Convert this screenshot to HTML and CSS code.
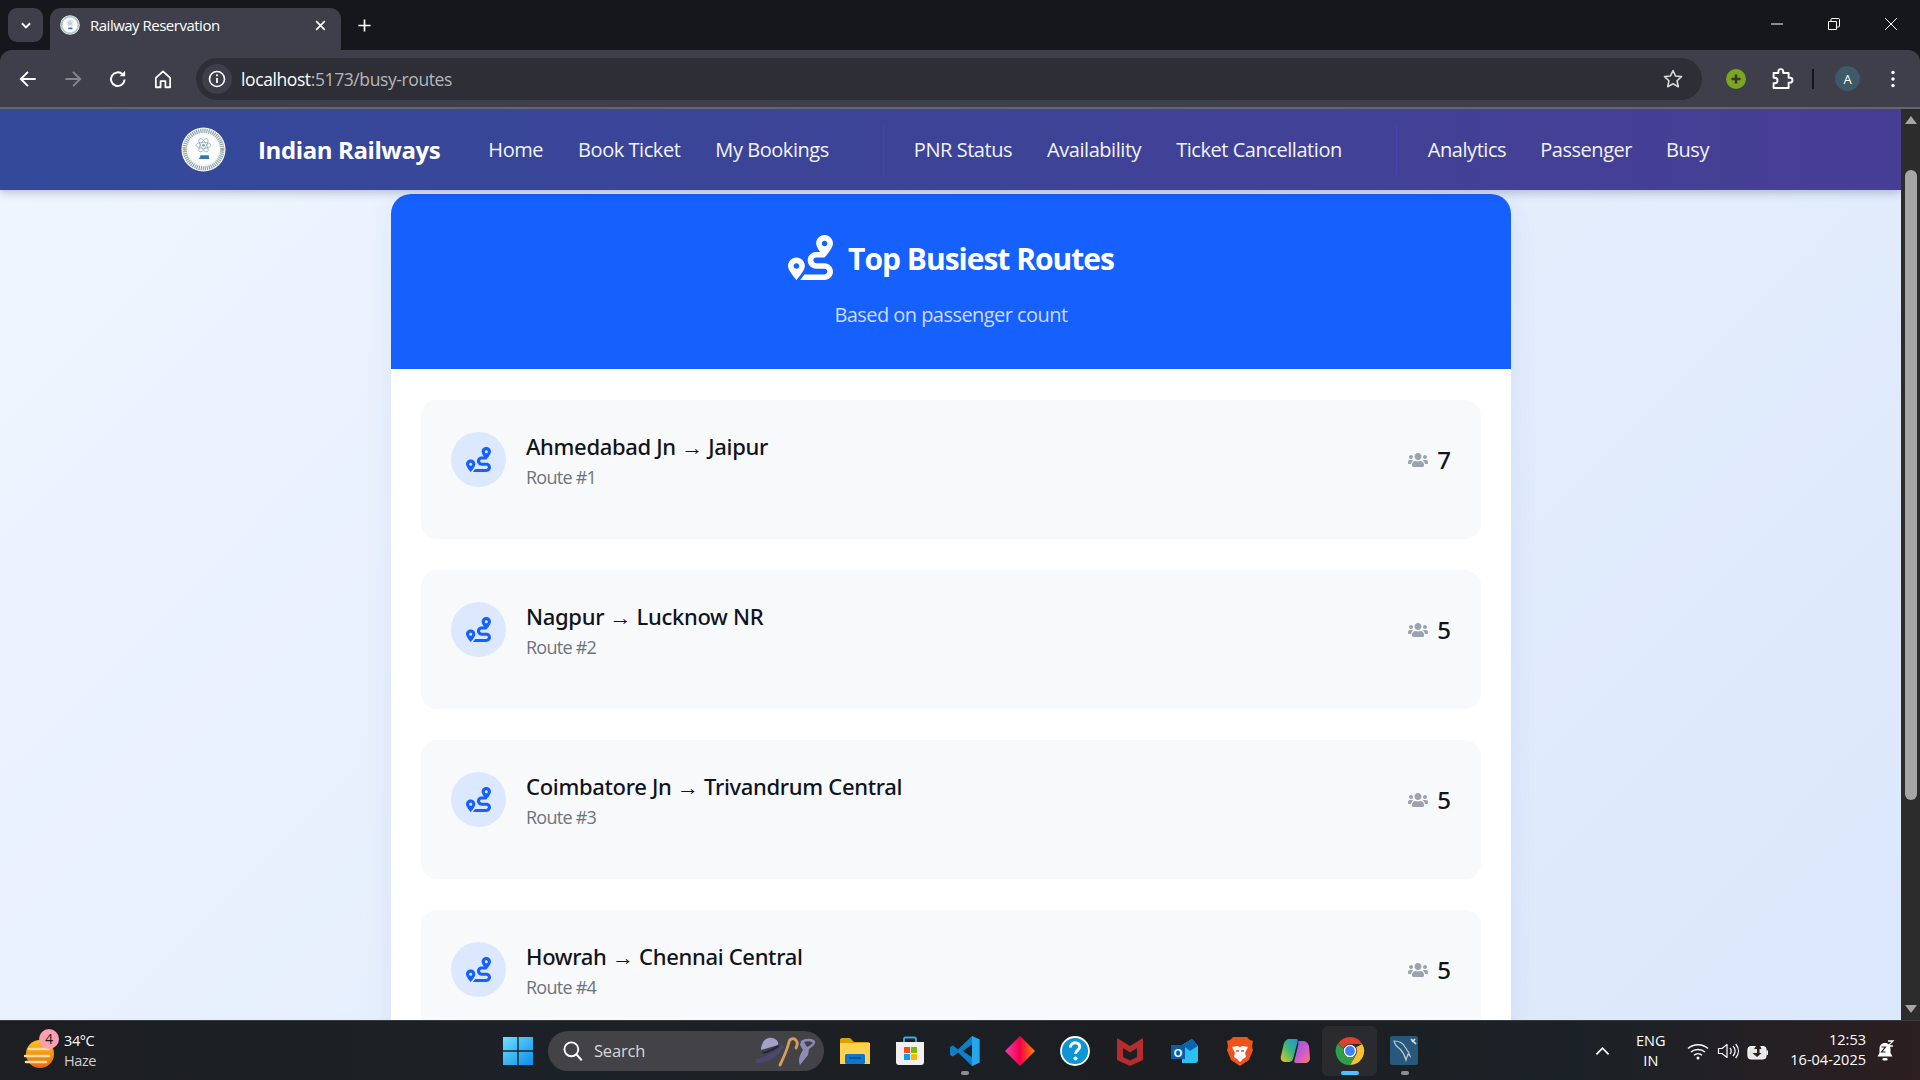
FILE: index.html
```html
<!DOCTYPE html>
<html lang="en">
<head>
<meta charset="utf-8">
<title>Railway Reservation</title>
<link rel="stylesheet" href="styles.css">
</head>
<body>
<svg class="defs" width="0" height="0" aria-hidden="true">
  <defs>
    <symbol id="route" viewBox="0 0 512 512"><path d="M416 320h-96c-17.6 0-32-14.4-32-32s14.4-32 32-32h96s96-107 96-160-43-96-96-96-96 43-96 96c0 25.5 22.2 63.4 45.3 96H320c-52.9 0-96 43.1-96 96s43.1 96 96 96h96c17.6 0 32 14.4 32 32s-14.4 32-32 32H185.5c-16 24.8-33.8 47.7-47.3 64H416c52.9 0 96-43.1 96-96s-43.1-96-96-96zm0-256c17.7 0 32 14.3 32 32s-14.3 32-32 32-32-14.3-32-32 14.3-32 32-32zM96 256c-53 0-96 43-96 96s96 160 96 160 96-107 96-160-43-96-96-96zm0 128c-17.7 0-32-14.3-32-32s14.3-32 32-32 32 14.3 32 32-14.3 32-32 32z"/></symbol>
    <symbol id="users" viewBox="0 0 640 512"><path d="M96 224c35.3 0 64-28.7 64-64s-28.7-64-64-64-64 28.7-64 64 28.7 64 64 64zm448 0c35.3 0 64-28.7 64-64s-28.7-64-64-64-64 28.7-64 64 28.7 64 64 64zm32 32h-64c-17.6 0-33.5 7.1-45.1 18.6 40.3 22.1 68.9 62 75.1 109.4h66c17.7 0 32-14.3 32-32v-32c0-35.3-28.7-64-64-64zm-256 0c61.9 0 112-50.1 112-112S381.9 32 320 32 208 82.1 208 144s50.1 112 112 112zm76.8 32h-8.3c-20.8 10-43.9 16-68.5 16s-47.6-6-68.5-16h-8.3C179.6 288 128 339.6 128 403.2V432c0 26.5 21.5 48 48 48h288c26.5 0 48-21.5 48-48v-28.8c0-63.6-51.6-115.2-115.2-115.2zm-223.7-13.4C161.5 263.1 145.6 256 128 256H64c-35.3 0-64 28.7-64 64v32c0 17.7 14.3 32 32 32h65.9c6.3-47.4 34.9-87.3 75.2-109.4z"/></symbol>
    <symbol id="seal" viewBox="0 0 48 48">
      <circle cx="24" cy="24" r="23.5" fill="#f4f7f6"/>
      <circle cx="24" cy="24" r="20" fill="none" stroke="#8ba3ad" stroke-width="4.500" stroke-dasharray="1.2 1"/>
      <circle cx="24" cy="24" r="16" fill="#fff"/>
      <g fill="none" stroke="#7d9fb3" stroke-width=".7">
        <ellipse cx="24" cy="19.500" rx="8" ry="3.200"/>
        <ellipse cx="24" cy="19.500" rx="8" ry="3.200" transform="rotate(60 24 19.500)"/>
        <ellipse cx="24" cy="19.500" rx="8" ry="3.200" transform="rotate(-60 24 19.500)"/>
      </g>
      <circle cx="24" cy="19.500" r="1.500" fill="#7d9fb3"/>
      <path d="M19 34l2-4h8l1 1v3z" fill="#2f7ab5"/>
      <circle cx="3.600" cy="24" r="1.300" fill="#e8953f"/>
      <circle cx="44.400" cy="24" r="1.300" fill="#e8953f"/>
    </symbol>
  </defs>
</svg>

<header class="browser">
  <div class="tabstrip">
    <div class="tab-search">
      <svg viewBox="0 0 12 12" class="ic12"><path d="M2.500 4.500 6 8l3.500-3.500" fill="none" stroke="#fff" stroke-width="1.600"/></svg>
    </div>
    <div class="tab">
      <svg class="favicon"><use href="#seal"/></svg>
      <span class="tab-title">Railway Reservation</span>
      <svg viewBox="0 0 12 12" class="tab-close"><path d="M2 2l8 8M10 2l-8 8" stroke="#fff" stroke-width="1.500"/></svg>
    </div>
    <svg viewBox="0 0 16 16" class="new-tab"><path d="M8 1.500v13M1.500 8h13" stroke="#fff" stroke-width="1.800"/></svg>
    <div class="win-controls">
      <svg viewBox="0 0 14 14" class="win-btn"><path d="M1 7h12" stroke="#fff" stroke-width="1"/></svg>
      <svg viewBox="0 0 14 14" class="win-btn"><path d="M1.500 4.500h8v8h-8zM4 4.500V2.500c0-.6.4-1 1-1h6.500c.6 0 1 .4 1 1V9c0 .6-.4 1-1 1h-2" fill="none" stroke="#fff" stroke-width="1"/></svg>
      <svg viewBox="0 0 14 14" class="win-btn"><path d="M1 1l12 12M13 1L1 13" stroke="#fff" stroke-width="1"/></svg>
    </div>
  </div>
  <div class="toolbar">
    <div class="tool"><svg viewBox="0 0 20 20" class="ic20"><path d="M17 10H4M10 3.500 3.500 10l6.500 6.500" fill="none" stroke="#fff" stroke-width="1.800"/></svg></div>
    <div class="tool"><svg viewBox="0 0 20 20" class="ic20"><path d="M3 10h13M10 3.500l6.500 6.500L10 16.500" fill="none" stroke="#85868c" stroke-width="1.800"/></svg></div>
    <div class="tool"><svg viewBox="0 0 20 20" class="ic20"><path d="M16 10.500a6.200 6.200 0 1 1-1.800-4.700" fill="none" stroke="#fff" stroke-width="1.800"/><path d="M16.500 2.500v5h-5z" fill="#fff"/></svg></div>
    <div class="tool"><svg viewBox="0 0 20 20" class="ic20"><path d="M3.500 9 10 3l6.500 6v8.500h-4.300V12H7.800v5.500H3.500z" fill="none" stroke="#fff" stroke-width="1.600" stroke-linejoin="round"/></svg></div>
    <div class="omnibox">
      <div class="site-info"><svg viewBox="0 0 20 20" class="ic18"><circle cx="10" cy="10" r="7.500" fill="none" stroke="#fff" stroke-width="1.600"/><path d="M10 9v5" stroke="#fff" stroke-width="1.800"/><circle cx="10" cy="6.300" r="1.100" fill="#fff"/></svg></div>
      <span class="url"><span class="url-host">localhost</span>:5173/busy-routes</span>
      <svg viewBox="0 0 20 20" class="star"><path d="m10 2.300 2.300 5 5.400.6-4 3.700 1.100 5.400-4.800-2.700L5.200 17l1.100-5.400-4-3.700 5.400-.6z" fill="none" stroke="#d6d6d8" stroke-width="1.500" stroke-linejoin="round"/></svg>
    </div>
    <div class="tray-tools">
      <svg viewBox="0 0 20 20" class="ext-green"><circle cx="10" cy="10" r="10" fill="#7ba61f"/><path d="M10 5.500v9M5.500 10h9" stroke="#33363b" stroke-width="2.600"/></svg>
      <svg viewBox="0 0 20 20" class="puzzle"><path d="M3 5h4V3.800a2 2 0 0 1 4 0V5h4.500v4h1.200a2 2 0 0 1 0 4h-1.200v4.500H3v-4h1a2 2 0 0 0 0-4.500H3z" fill="none" stroke="#fff" stroke-width="1.600" stroke-linejoin="round"/></svg>
      <span class="tool-sep"></span>
      <span class="avatar">A</span>
      <svg viewBox="0 0 6 20" class="dots"><circle cx="3" cy="3.500" r="1.700" fill="#fff"/><circle cx="3" cy="10" r="1.700" fill="#fff"/><circle cx="3" cy="16.500" r="1.700" fill="#fff"/></svg>
    </div>
  </div>
</header>

<div class="viewport">
  <div class="page">
    <nav class="nav">
      <svg class="logo"><use href="#seal"/></svg>
      <a class="brand">Indian Railways</a>
      <div class="nav-group">
        <a class="nav-link">Home</a>
        <a class="nav-link">Book Ticket</a>
        <a class="nav-link">My Bookings</a>
      </div>
      <div class="nav-group nav-group-sep">
        <a class="nav-link">PNR Status</a>
        <a class="nav-link">Availability</a>
        <a class="nav-link">Ticket Cancellation</a>
      </div>
      <div class="nav-group nav-group-sep nav-group-last">
        <a class="nav-link">Analytics</a>
        <a class="nav-link">Passenger</a>
        <a class="nav-link">Busy</a>
      </div>
    </nav>
    <main class="content">
      <section class="card">
        <div class="card-head">
          <h1 class="card-title"><svg class="title-icon"><use href="#route"/></svg><span class="title-text">Top Busiest Routes</span></h1>
          <p class="card-sub">Based on passenger count</p>
        </div>
        <div class="card-body">
          <article class="route">
            <span class="route-badge"><svg class="route-icon"><use href="#route"/></svg></span>
            <div class="route-text"><h2 class="route-name">Ahmedabad Jn → Jaipur</h2><p class="route-num">Route #1</p></div>
            <div class="route-count"><svg class="users-icon"><use href="#users"/></svg><span class="count">7</span></div>
          </article>
          <article class="route">
            <span class="route-badge"><svg class="route-icon"><use href="#route"/></svg></span>
            <div class="route-text"><h2 class="route-name">Nagpur → Lucknow NR</h2><p class="route-num">Route #2</p></div>
            <div class="route-count"><svg class="users-icon"><use href="#users"/></svg><span class="count">5</span></div>
          </article>
          <article class="route">
            <span class="route-badge"><svg class="route-icon"><use href="#route"/></svg></span>
            <div class="route-text"><h2 class="route-name">Coimbatore Jn → Trivandrum Central</h2><p class="route-num">Route #3</p></div>
            <div class="route-count"><svg class="users-icon"><use href="#users"/></svg><span class="count">5</span></div>
          </article>
          <article class="route">
            <span class="route-badge"><svg class="route-icon"><use href="#route"/></svg></span>
            <div class="route-text"><h2 class="route-name">Howrah → Chennai Central</h2><p class="route-num">Route #4</p></div>
            <div class="route-count"><svg class="users-icon"><use href="#users"/></svg><span class="count">5</span></div>
          </article>
        </div>
      </section>
    </main>
  </div>
  <div class="scrollbar">
    <svg viewBox="0 0 14 10" class="sb-arrow"><path d="M7 1l6 8H1z" fill="#a6a6a6"/></svg>
    <div class="sb-track"><div class="sb-thumb"></div></div>
    <svg viewBox="0 0 14 10" class="sb-arrow"><path d="M7 9 1 1h12z" fill="#a6a6a6"/></svg>
  </div>
</div>

<footer class="taskbar">
  <div class="weather">
    <span class="weather-icon">
      <svg viewBox="0 0 30 34" class="sun"><defs><linearGradient id="sung" x1="0" y1="0" x2="0" y2="1"><stop offset="0" stop-color="#fcc21b"/><stop offset="1" stop-color="#e8690c"/></linearGradient></defs><circle cx="16" cy="17" r="14" fill="url(#sung)"/><path d="M5 12h20M1 19h24M2 25h20" stroke="#f4dc9e" stroke-width="2.600" stroke-linecap="round"/></svg>
      <span class="badge">4</span>
    </span>
    <div class="weather-text"><span>34°C</span><span class="weather-sub">Haze</span></div>
  </div>
  <div class="task-center">
    <div class="task-item start">
      <svg viewBox="0 0 30 30" class="ic30"><defs><linearGradient id="wing" x1="0" y1="0" x2="1" y2="1"><stop offset="0" stop-color="#6fe0ff"/><stop offset="1" stop-color="#0a8de8"/></linearGradient></defs><path d="M0 1h14.300v13.300H0zM15.700 1H30v13.300H15.700zM0 15.700h14.300V29H0zM15.700 15.700H30V29H15.700z" fill="url(#wing)"/></svg>
    </div>
    <div class="search">
      <svg viewBox="0 0 20 20" class="ic20"><circle cx="8.500" cy="8.500" r="6.300" fill="none" stroke="#fff" stroke-width="1.700"/><path d="m13 13 5 5.500" stroke="#fff" stroke-width="1.900"/></svg>
      <span class="search-label">Search</span>
      <svg viewBox="0 0 64 32" class="search-art">
        <path d="M7 15C7 7 12 2 18 3c5 1 7 4 6 7z" fill="#a3a1c9"/>
        <path d="M1 24c9-1 19-6 27-14l2 1c-4 9-16 17-27 17z" fill="#4a4970"/>
        <path d="M8 17c6-1 11-4 16-7l1 2c-5 3-11 6-16 7z" fill="#25253a"/>
        <path d="M26 30c4-8 7-15 9-23 1-4 6-5 8 0 1 2 0 4-1 6" fill="none" stroke="#d79c5e" stroke-width="2.800" stroke-linecap="round"/>
        <path d="M47 6c4-3 11-3 14 0 1 3-3 6-6 8l-1 6-8 10c-2-4-1-9 3-15l-3-5z" fill="#8d8bb4"/>
        <path d="M50 7c3-1 7-1 9 1-2 2-4 3-6 4z" fill="#434347"/>
      </svg>
    </div>
    <div class="task-item">
      <svg viewBox="0 0 30 30" class="ic30"><path d="M0 4c0-1 .7-2 2-2h8l4 4h14c1 0 2 1 2 2v18H0z" fill="#dca000"/><rect y="7" width="30" height="21" fill="#fdd24f"/><rect x="5" y="18" width="20" height="10" rx="1.500" fill="#0b77cf"/><path d="M9 22h12" stroke="#05487f" stroke-width="1.500"/></svg>
    </div>
    <div class="task-item">
      <svg viewBox="0 0 30 30" class="ic30"><path d="M9 6V3c0-1 .5-1.500 1.500-1.500h9c1 0 1.500.5 1.500 1.500v3" fill="none" stroke="#2ab4e8" stroke-width="1.800"/><path d="M1 6h28v20c0 2-1 3-3 3H4c-2 0-3-1-3-3z" fill="#f0f0f0"/><rect x="9" y="11" width="6" height="6" fill="#f25022"/><rect x="16" y="11" width="6" height="6" fill="#7fba00"/><rect x="9" y="18" width="6" height="6" fill="#00a4ef"/><rect x="16" y="18" width="6" height="6" fill="#ffb900"/></svg>
    </div>
    <div class="task-item running">
      <svg viewBox="0 0 30 30" class="ic30"><path d="M22 0 29.500 3.500v23L22 30 8 16.500l-5 4-3-1.500V11l3-1.500 5 4z" fill="#0e7fc9"/><path d="M22 0 29.500 3.500v23L22 30z" fill="#25a6ed"/><path d="M22 8.500 13 15l9 6.500z" fill="#1c1f23"/></svg>
    </div>
    <div class="task-item">
      <svg viewBox="0 0 30 30" class="ic30"><defs><linearGradient id="dia" x1="0" y1="0" x2="1" y2="0"><stop offset="0" stop-color="#f03fb0"/><stop offset=".5" stop-color="#f5004a"/><stop offset="1" stop-color="#fa8a00"/></linearGradient></defs><path d="M15 0l15 15-15 15L0 15z" fill="url(#dia)"/></svg>
    </div>
    <div class="task-item">
      <svg viewBox="0 0 30 30" class="ic30"><circle cx="15" cy="15" r="14" fill="#0c96d6" stroke="#fff" stroke-width="1.800"/><path d="M10.500 11.500c0-3 2-4.800 4.700-4.800s4.500 1.700 4.500 4c0 3.500-4.200 3.700-4.200 7" fill="none" stroke="#fff" stroke-width="3"/><circle cx="15.500" cy="22.500" r="2" fill="#fff"/></svg>
    </div>
    <div class="task-item">
      <svg viewBox="0 0 30 30" class="ic30"><path d="M2 2 15 10 28 2v22L15 30 2 24z" fill="#b62b2e"/><path d="M8 12l7 4.500L22 12v9l-7 3.500L8 21z" fill="#1c1f23"/></svg>
    </div>
    <div class="task-item">
      <svg viewBox="0 0 30 30" class="ic30"><path d="M12 9 22 3l6 7v14c0 2-1 3-3 3H12z" fill="#2cc0f0"/><path d="M12 9l10-6 6 7-8 5z" fill="#0c63b4"/><rect x="1" y="9" width="14" height="14" fill="#0a5ea8"/><text x="8" y="20.500" class="ol-letter">O</text></svg>
    </div>
    <div class="task-item">
      <svg viewBox="0 0 30 30" class="ic30"><path d="M8 1h14l3 3 3 1-1 5 1 4-4 10-9 6-9-6-4-10 1-4-1-5 3-1z" fill="#f0521b"/><path d="M7 11l5-1 3 1 3-1 5 1-3 6 1 4-3 2-3 3-3-3-3-2 1-4z" fill="#fff"/><path d="M11 15h3M16 15h3" stroke="#f0521b" stroke-width="1.600"/></svg>
    </div>
    <div class="task-item">
      <svg viewBox="0 0 30 30" class="ic30"><defs><linearGradient id="cop1" x1="0" y1="1" x2="1" y2="0"><stop offset="0" stop-color="#f5c518"/><stop offset=".5" stop-color="#3bb878"/><stop offset="1" stop-color="#1f8fe0"/></linearGradient><linearGradient id="cop2" x1="0" y1="0" x2="1" y2="1"><stop offset="0" stop-color="#7a5cf0"/><stop offset=".6" stop-color="#d95bc6"/><stop offset="1" stop-color="#f8814a"/></linearGradient></defs><path d="M9 3h7c2 0 2 1 1.500 3L13 23c-.6 2-2 3-4 3H5c-3 0-5-3-4-6l3-13C5 5 7 3 9 3z" fill="url(#cop1)"/><path d="M19 5h4c3 0 5 2 6 5l1 12c0 3-2 5-5 5h-9c-2 0-2-1-1.500-3l4-16C18 6 18 5 19 5z" fill="url(#cop2)"/></svg>
    </div>
    <div class="task-item active">
      <svg viewBox="0 0 32 32" class="ic30"><path d="M16 1a15 15 0 0 1 13 7.500H16a7.500 7.500 0 0 0-7 4.800L3.500 8A15 15 0 0 1 16 1z" fill="#e0402f"/><path d="M29 8.500A15 15 0 0 1 16 31l6.500-11.300A7.500 7.500 0 0 0 22.500 12z" fill="#fbc02d"/><path d="M3 8a15 15 0 0 0 13 23l6.500-11.300a7.500 7.500 0 0 1-13.500-6z" fill="#2f9e48"/><circle cx="16" cy="16" r="6" fill="#3f80f5" stroke="#fff" stroke-width="1.500"/></svg>
    </div>
    <div class="task-item running">
      <svg viewBox="0 0 30 30" class="ic30"><rect width="28" height="29" rx="2.500" fill="#28597c"/><path d="M4 5c5 0 9 2 11 6 2 3 4 5 5 9l-2-2-2 6c-1-4-3-8-6-11-3-2-5-4-6-8z" fill="none" stroke="#b5c6cf" stroke-width="1.200"/><path d="M21 3l5 5M25 3l-3 3" stroke="#dbe3e7" stroke-width="1.600"/></svg>
    </div>
  </div>
  <div class="tray">
    <svg viewBox="0 0 16 10" class="chev"><path d="M1.500 8.500 8 2l6.500 6.500" fill="none" stroke="#fff" stroke-width="1.800"/></svg>
    <div class="lang"><span>ENG</span><span>IN</span></div>
    <svg viewBox="0 0 22 18" class="tray-ic"><path d="M1 6.500c5.500-5 14.500-5 20 0M4 10c3.800-3.400 10.200-3.400 14 0M7 13.300c2.300-2 5.700-2 8 0" fill="none" stroke="#fff" stroke-width="1.400"/><circle cx="11" cy="16" r="1.500" fill="#fff"/></svg>
    <svg viewBox="0 0 22 18" class="tray-ic"><path d="M1.500 6.500h3.500L10 2.500v13L5 11.500H1.500z" fill="none" stroke="#fff" stroke-width="1.200" stroke-linejoin="round"/><path d="M13 6c1.500 1.800 1.500 4.200 0 6M16 4c2.600 3 2.600 7 0 10M18.700 2c3.600 4.300 3.600 9.700 0 14" fill="none" stroke="#fff" stroke-width="1.200"/></svg>
    <svg viewBox="0 0 22 18" class="tray-ic"><rect x="1" y="4.500" width="18" height="12.500" rx="3.500" fill="#e8e8e8" stroke="#fff" stroke-width="1.200"/><path d="M19.500 8.500h1.500v4.500h-1.500z" fill="#fff"/><path d="M11.500 0 7 7h3v4H5.500l4.500 4 4.500-4H12.500V7h2z" fill="#26201f"/></svg>
    <div class="clock"><span>12:53</span><span>16-04-2025</span></div>
    <svg viewBox="0 0 20 22" class="bell"><path d="M10 3c-3.500 0-5.500 2.500-5.500 6v4l-2 3.500h15L15.500 13V9c0-3.500-2-6-5.500-6z" fill="#fff"/><rect x="7.500" y="18" width="5" height="2.500" rx="1.200" fill="#fff"/><path d="M6.500 7h4l-4 5h4" fill="none" stroke="#22201f" stroke-width="1.200"/><path d="M13 1h5l-5 5h5" fill="none" stroke="#fff" stroke-width="1.300"/></svg>
  </div>
</footer>
</body>
</html>
```

FILE: styles.css
```css
* { box-sizing: border-box; }
html, body { margin: 0; height: 100%; }
body {
  width: 1920px;
  height: 1080px;
  display: flex;
  flex-direction: column;
  overflow: hidden;
  font-family: "Open Sans", "Noto Sans", "Liberation Sans", sans-serif;
}
.defs { position: absolute; }
svg { display: block; flex: none; }
.ic12 { width: 14px; height: 14px; }
.ic18 { width: 20px; height: 20px; }
.ic20 { width: 22px; height: 22px; }
.ic30 { width: 30px; height: 30px; }

/* browser chrome */
.browser { flex: none; height: 109px; background: #16171c; }
.tabstrip { height: 50px; display: flex; align-items: flex-start; padding: 8px 0 0 8px; }
.tab-search {
  width: 35px; height: 34px; border-radius: 9px; background: #3e3f4b;
  display: flex; align-items: center; justify-content: center;
}
.tab {
  width: 291px; height: 42px; margin-left: 7px; padding: 0 14px 8px 10px;
  background: #3e3f4b; border-radius: 11px 11px 0 0;
  display: flex; align-items: center; color: #fff;
}
.favicon { width: 20px; height: 20px; }
.tab-title { margin-left: 10px; font-size: 15px; letter-spacing: -0.5px; flex: 1; white-space: nowrap; }
.tab-close { width: 13px; height: 13px; }
.new-tab { width: 15px; height: 15px; margin: 10px 0 0 16px; }
.win-controls { margin-left: auto; display: flex; padding: 9px 22px 0 0; gap: 43px; }
.win-btn { width: 14px; height: 14px; }
.toolbar {
  height: 59px; background: #3e3f4b; border-bottom: 2px solid #66676c;
  border-radius: 12px 12px 0 0;
  display: flex; align-items: center; padding: 0 0 0 5px;
}
.tool { width: 45px; height: 40px; display: flex; align-items: center; justify-content: center; }
.omnibox {
  margin-left: 11px; width: 1506px; height: 42px; border-radius: 21px; background: #2d2e36;
  display: flex; align-items: center; padding: 0 18px 0 6px; color: #b6b6ba;
}
.site-info {
  width: 30px; height: 30px; border-radius: 50%; background: #3e3f4b;
  display: flex; align-items: center; justify-content: center;
}
.url { margin-left: 9px; font-size: 17.5px; letter-spacing: -0.4px; flex: 1; }
.url-host { color: #fff; }
.star { width: 22px; height: 22px; }
.tray-tools { display: flex; align-items: center; margin-left: 24px; }
.ext-green { width: 20px; height: 20px; }
.puzzle { width: 24px; height: 24px; margin-left: 24px; }
.tool-sep { width: 2px; height: 20px; background: #15161a; margin-left: 18px; }
.avatar {
  width: 25px; height: 25px; border-radius: 50%; background: #3d5a66; color: #fff;
  font-size: 13px; display: flex; align-items: center; justify-content: center; margin-left: 21px;
}
.dots { width: 6px; height: 20px; margin-left: 30px; }

/* page */
.viewport { flex: 1; min-height: 0; display: flex; }
.page { flex: 1; min-width: 0; overflow: hidden; background: linear-gradient(135deg, #f0f6ff 0%, #dbe7fb 100%); }
.nav {
  height: 81px; padding-left: 181px;
  background: linear-gradient(90deg, #33499a 0%, #473e94 100%);
  box-shadow: 0 3px 8px rgba(30, 40, 90, .25);
  display: flex; align-items: center; color: #fff; position: relative;
}
.logo { width: 45px; height: 45px; }
.brand { margin-left: 32px; font-size: 24px; font-weight: 700; letter-spacing: -0.4px; white-space: nowrap; color: #fff; }
.nav-group { display: flex; align-items: center; height: 50px; gap: 35px; margin-left: 48px; }
.nav-group-sep { border-left: 1px solid #4b41b4; padding-left: 30px; margin-left: 54px; }
.nav-group-last { gap: 34px; padding-left: 31px; }
.nav-link { font-size: 20px; color: #f1f3fb; letter-spacing: -0.45px; white-space: nowrap; }

.content { display: flex; justify-content: center; padding-top: 4px; }
.card {
  width: 1120px; margin-left: 1px; background: #fff; border-radius: 20px 20px 0 0;
  box-shadow: 0 6px 30px rgba(40, 70, 140, .08);
}
.card-head {
  height: 175px; background: #1660fe; border-radius: 20px 20px 0 0; color: #fff;
  display: flex; flex-direction: column; align-items: center; padding-top: 40px;
}
.card-title {
  margin: 0; font-size: 30px; line-height: 45px; font-weight: 700; letter-spacing: -1px;
  display: flex; align-items: center; gap: 15px;
}
.title-text { padding-top: 2px; }
.title-icon { width: 45px; height: 45px; fill: #fff; }
.card-sub { margin: 19px 0 0; font-size: 20px; line-height: 30px; color: #c9dbff; letter-spacing: -0.55px; }
.card-body { padding: 31px 30px 0; display: flex; flex-direction: column; gap: 31px; }
.route {
  height: 139px; padding: 32px 30px 0; background: #f8f9fb; border-radius: 16px;
  display: flex; align-items: flex-start;
}
.route-badge {
  flex: none; width: 55px; height: 55px; border-radius: 50%; background: #dce8fd;
  display: flex; align-items: center; justify-content: center;
}
.route-icon { width: 25px; height: 25px; fill: #1660fe; }
.route-text { flex: 1; margin-left: 20px; }
.route-name { margin: -2px 0 0; font-family: "Noto Sans", "Open Sans", sans-serif; font-size: 22px; line-height: 33px; font-weight: 500; color: #10141c; letter-spacing: -0.32px; }
.route-num { margin: 1px 0 0; font-size: 18px; line-height: 27px; color: #6c757d; letter-spacing: -0.75px; }
.route-count { display: flex; align-items: center; gap: 9px; height: 55px; }
.users-icon { width: 20px; height: 16px; fill: #9aa3af; }
.count { font-family: "Noto Sans", "Open Sans", sans-serif; font-size: 24px; font-weight: 500; color: #10141c; }

.scrollbar { flex: none; width: 19px; background: #2c2c2c; display: flex; flex-direction: column; align-items: center; padding: 6px 0; }
.sb-arrow { width: 14px; height: 10px; }
.sb-track { flex: 1; width: 100%; padding: 45px 2px 0 2px; }
.sb-thumb { height: 630px; width: 12px; margin: 0 auto; border-radius: 6px; background: #a6a6a6; }

/* taskbar */
.taskbar {
  flex: none; height: 60px; border-top: 1px solid #3a3b3d; color: #fff; position: relative;
  background: linear-gradient(90deg, #1d1e21 0%, #1b2227 30%, #1c1d21 60%, #1b2227 82%, #2c1e21 100%);
  display: flex; align-items: center;
}
.weather { width: 489px; padding-left: 24px; display: flex; align-items: center; }
.weather-icon { width: 40px; height: 40px; position: relative; display: block; }
.sun { width: 30px; height: 34px; position: absolute; left: 0; top: 6px; }
.badge {
  position: absolute; left: 15px; top: -2px; width: 20px; height: 20px; border-radius: 50%;
  background: #fc9fb0; color: #1a1a1a; font-size: 14px; line-height: 20px; text-align: center;
}
.weather-text { display: flex; flex-direction: column; font-size: 14.500px; line-height: 20px; letter-spacing: -0.4px; }
.weather-sub { color: #d0d0d0; }
.task-center { display: flex; align-items: center; height: 59px; }
.task-item {
  width: 55px; height: 50px; display: flex; align-items: center; justify-content: center; position: relative;
}
.start { width: 57px; }
.running::after, .active::after {
  content: ""; position: absolute; left: 50%; bottom: 1px; transform: translateX(-50%);
  width: 8px; height: 4px; border-radius: 2px; background: #8e8e92;
}
.active { background: #2a2b2f; border-radius: 6px; }
.active::after { width: 18px; background: #4cc2ff; }
.search {
  width: 276px; height: 40px; border-radius: 20px; background: #434347; margin: 0 3px 0 2px;
  display: flex; align-items: center; padding: 0 6px 0 14px;
}
.search-label { margin-left: 10px; font-size: 16.500px; color: #d8d8d8; flex: 1; letter-spacing: -0.2px; }
.search-art { width: 64px; height: 32px; }
.ol-letter { font: 700 11px "Liberation Sans", sans-serif; fill: #fff; text-anchor: middle; }
.tray { position: absolute; right: 0; top: 0; bottom: 0; display: flex; align-items: center; }
.chev { width: 15px; height: 10px; margin-right: 21px; }
.lang { display: flex; flex-direction: column; align-items: center; font-size: 14.500px; line-height: 20px; width: 40px; margin-right: 16px; }
.tray-ic { width: 22px; height: 18px; margin-right: 8px; }
.clock { display: flex; flex-direction: column; align-items: flex-end; font-size: 14.500px; line-height: 20px; margin-left: 13.500px; margin-top: -2px; }
.bell { width: 20px; height: 22px; margin: 0 25px 0 9px; }
```
